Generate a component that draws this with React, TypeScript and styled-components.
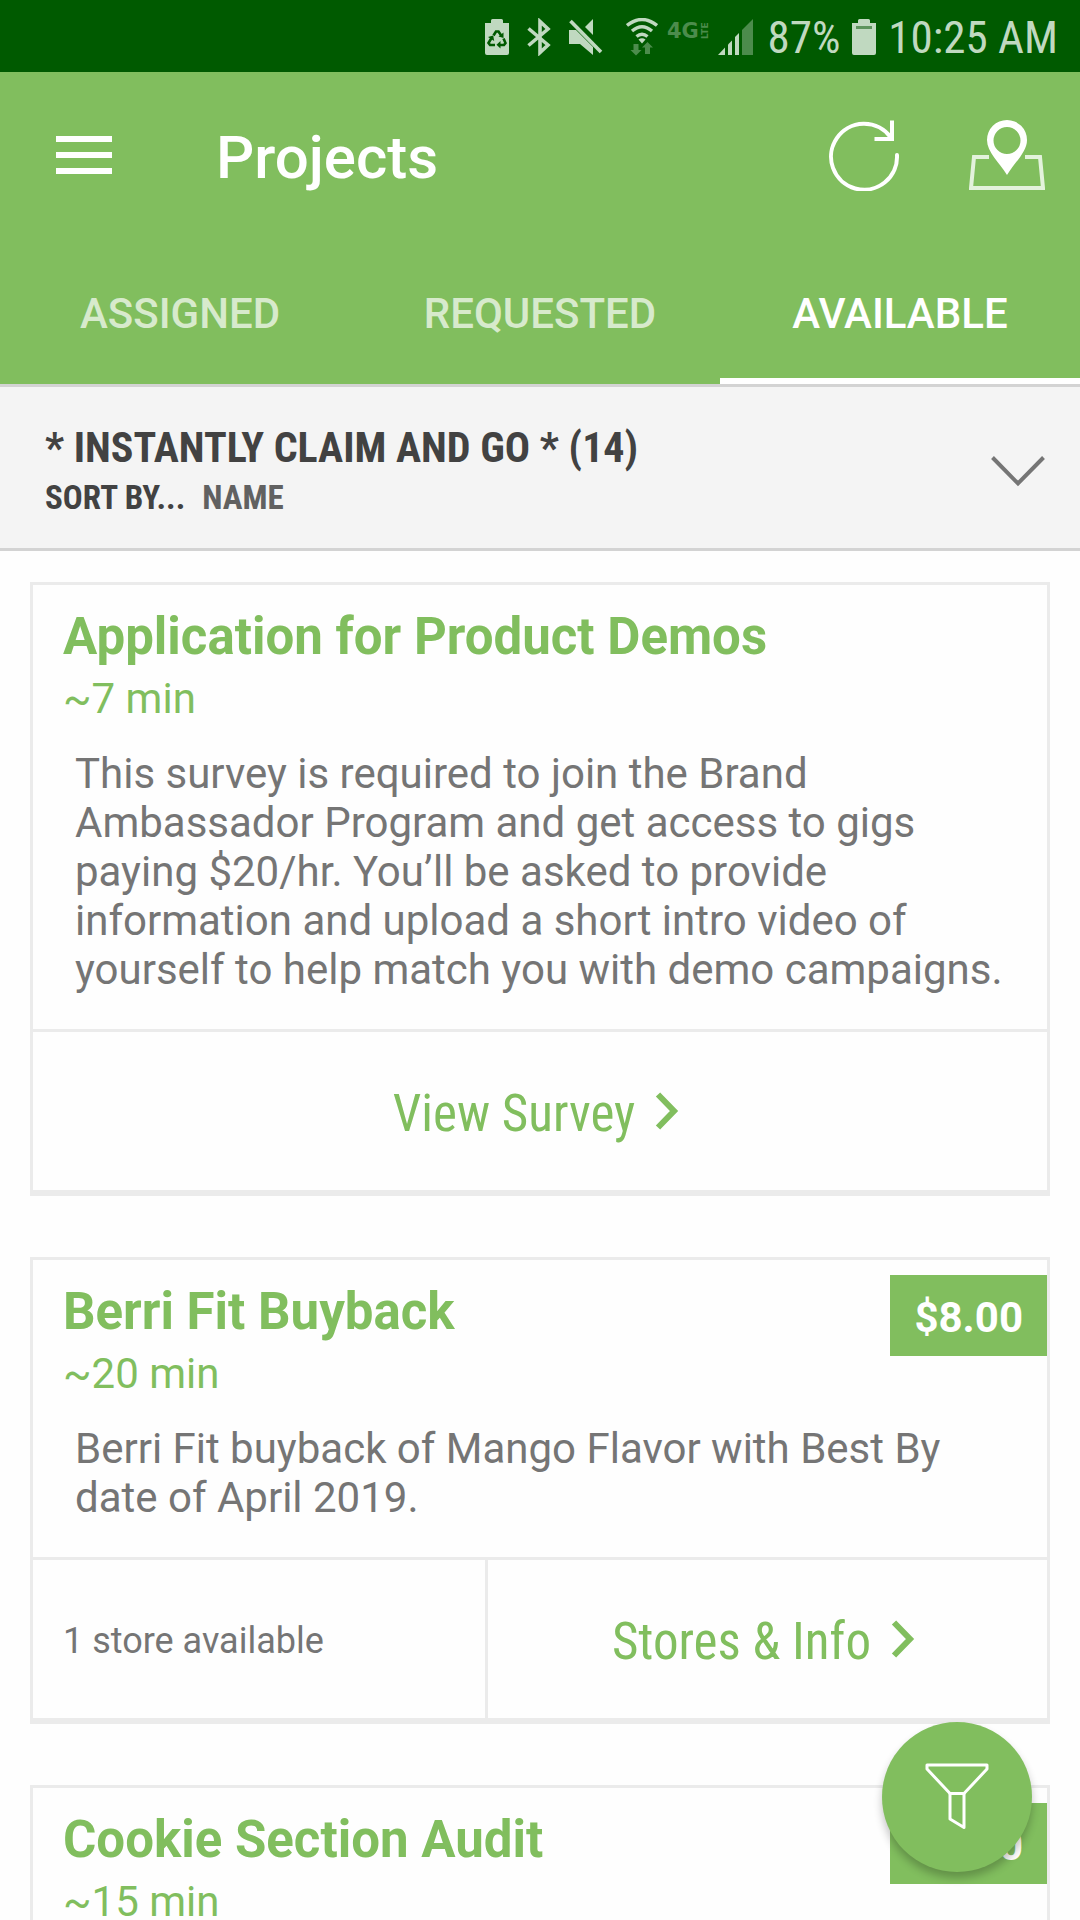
import React from "react";
import styled, { createGlobalStyle, css } from "styled-components";

const green = "#81be5e";
const statusInk = "#c0d9c0";
const line = "#ebebeb";
const body = '"Roboto", "Noto Sans", sans-serif';
const condensed = '"Roboto Condensed", "Liberation Sans Narrow", "Roboto", sans-serif';

const GlobalStyle = createGlobalStyle`
  * { box-sizing: border-box; }
  body { margin: 0; background: #fefefe; font-family: ${body}; }
  h1, h2, h3, p { margin: 0; }
  button { border: 0; padding: 0; background: none; font: inherit; color: inherit; cursor: pointer; }
  svg { display: block; flex: none; }
`;

const Screen = styled.div`
  display: flex;
  flex-direction: column;
  height: 100vh;
  overflow: hidden;
`;

const StatusBar = styled.div`
  display: flex;
  align-items: center;
  justify-content: flex-end;
  flex: none;
  height: 72px;
  padding: 0 22px;
  background: #005a00;
  color: ${statusInk};
  font: 400 45px/72px ${condensed};
`;

const StatusIcons = styled.div`
  display: flex;
  align-items: center;
  gap: 18px;
  padding-top: 2px;
  margin-right: 13px;
`;

const RadioIcons = styled.div`
  display: flex;
  align-items: center;
  gap: 9px;
  margin-left: 5px;
`;

const StatusText = styled.span`
  white-space: nowrap;
  padding-top: 4px;
`;

const StatusBattery = styled.span`
  margin: 2px 12px 0;
`;

const Header = styled.header`
  flex: none;
  background: ${green};
  color: #fff;
`;

const Toolbar = styled.div`
  display: flex;
  align-items: center;
  height: 168px;
  padding: 0 35px 2px 56px;
`;

const Title = styled.h1`
  flex: 1;
  margin-left: 104px;
  padding-top: 6px;
  font-size: 60px;
  line-height: 70px;
  font-weight: 500;
`;

const Actions = styled.div`
  display: flex;
  gap: 68px;
`;

const Tabs = styled.nav`
  display: grid;
  grid-template-columns: repeat(3, 1fr);
`;

const Tab = styled.button<{ $active?: boolean }>`
  height: 144px;
  padding-top: 10px;
  font-size: 42px;
  line-height: 50px;
  font-weight: 500;
  color: rgba(255, 255, 255, 0.7);
  border-bottom: 6px solid transparent;
  ${(p) => p.$active && css`
    color: #fff;
    border-bottom-color: #fff;
  `}
`;

const GroupBar = styled.button`
  display: flex;
  align-items: center;
  justify-content: space-between;
  flex: none;
  width: 100%;
  height: 167px;
  padding: 6px 34px 0 45px;
  background: #f4f4f4;
  border-top: 3px solid #d3d3d3;
  border-bottom: 3px solid #d3d3d3;
  text-align: left;
  color: #424242;
  font-family: ${condensed};
  font-weight: 700;
`;

const GroupTitle = styled.span`
  display: block;
  font-size: 42px;
  line-height: 54px;
`;

const GroupSort = styled.span`
  display: flex;
  gap: 17px;
  font-size: 33px;
  line-height: 46px;
`;

const SortValue = styled.span`
  color: #616161;
`;

const List = styled.main`
  display: flex;
  flex-direction: column;
  flex: 1;
  gap: 61px;
  min-height: 0;
  padding: 31px 30px 0;
  overflow: hidden;
`;

const Card = styled.article`
  flex: none;
  background: #fefefe;
  border: 3px solid ${line};
  border-bottom-width: 6px;
`;

const CardTop = styled.div`
  display: flex;
  justify-content: space-between;
  align-items: flex-start;
  padding-left: 30px;
  color: ${green};
`;

const Heading = styled.div`
  padding: 22px 0 18px;
`;

const CardTitle = styled.h2`
  font-size: 51px;
  line-height: 60px;
  font-weight: 700;
`;

const Duration = styled.p`
  font-size: 42px;
  line-height: 64px;
`;

const Price = styled.span`
  margin-top: 15px;
  padding: 4px 24px 0;
  background: ${green};
  color: #fff;
  font-size: 42px;
  line-height: 77px;
  font-weight: 700;
`;

const Description = styled.p`
  padding: 0 36px 35px 42px;
  color: #757575;
  font-size: 42px;
  line-height: 49px;
`;

const CardFooter = styled.div<{ $split: boolean }>`
  display: grid;
  grid-template-columns: ${(p) => (p.$split ? "455fr 559fr" : "1fr")};
  height: 161px;
  border-top: 3px solid ${line};
`;

const StoreCount = styled.div`
  display: flex;
  align-items: center;
  padding: 4px 0 0 30px;
  border-right: 3px solid ${line};
  color: #757575;
  font-size: 36px;
`;

const CardAction = styled.button`
  display: flex;
  align-items: center;
  justify-content: center;
  gap: 20px;
  padding-right: 8px;
  color: ${green};
  font-family: ${condensed};
  font-size: 51px;
  line-height: 60px;
`;

const ActionLabel = styled.span`
  padding-top: 5px;
`;

const FilterButton = styled.button`
  position: fixed;
  right: 48px;
  bottom: 48px;
  display: flex;
  align-items: center;
  justify-content: center;
  width: 150px;
  height: 150px;
  border-radius: 50%;
  background: ${green};
  box-shadow: 0 6px 9px rgba(0, 0, 0, 0.24);
`;

const BatteryShape = "M0 4h6V1.500q0-1.500 1.500-1.500h9q1.500 0 1.500 1.500V4h6v30q0 2-2 2H2q-2 0-2-2z";

function Recycle() {
  return (
    <svg width="24" height="36" viewBox="0 0 24 36" fill={statusInk}>
      <path d={BatteryShape} />
      <g fill="none" stroke="#005a00" strokeWidth="2.600">
        <path d="M8.500 16.500l2.500-4h2.500l3 4.500" />
        <path d="M18.500 19.500l2 4.500-1.500 2h-5" />
        <path d="M10 26H5l-1.500-2 3-5" />
      </g>
      <g fill="#005a00">
        <path d="M18.500 13.500v5.500l-5-1.500z" />
        <path d="M15.500 22v7.500l-4-3.700z" />
        <path d="M3 18l5.200-1.500 1 5.500z" />
      </g>
    </svg>
  );
}

function Bluetooth() {
  return (
    <svg width="24" height="38" viewBox="0 0 24 38" fill="none" stroke={statusInk} strokeWidth="3.600">
      <path d="M1.500 10.500L21 27 13 34.500V3.500L21 11 1.500 27.500" />
    </svg>
  );
}

function Muted() {
  return (
    <svg width="34" height="38" viewBox="0 0 34 38" fill={statusInk}>
      <path d="M0 12h7l17 17v8L11 26H0z" />
      <path d="M24 1v16l-8-8z" />
      <path d="M1.500 3L32 34" stroke={statusInk} strokeWidth="3.600" fill="none" />
    </svg>
  );
}

function Wifi() {
  return (
    <svg width="32" height="38" viewBox="0 0 32 38" fill="none" stroke={statusInk} strokeWidth="3.400">
      <path d="M1 7.500q15-12 30 0" />
      <path d="M6 13q10-8.500 20 0" />
      <path d="M10.500 18.500q5.500-4.500 11 0" />
      <path d="M12.500 21.500q3.500-2.500 7 0L16 25.500z" fill={statusInk} stroke="none" />
      <g fill="#4c8c4c" stroke="none">
        <path d="M7.500 26h5v6h3L10 37.500 4.500 32h3z" />
        <path d="M21.500 24l5.500 5.500h-3V36h-5v-6.500h-3z" />
      </g>
    </svg>
  );
}

function Network() {
  return (
    <svg width="42" height="38" viewBox="0 0 42 38" fill="#4c8c4c" fontFamily="DejaVu Sans, sans-serif" fontWeight="700">
      <text x="0" y="20" fontSize="21">4G</text>
      <text x="41" y="21" fontSize="9" transform="rotate(-90 41 21)">LTE</text>
    </svg>
  );
}

function Signal() {
  return (
    <svg width="36" height="38" viewBox="0 0 36 38" fill={statusInk}>
      <path d="M0 37l7-7.500V37z" />
      <path d="M10 26.500l4-4V37h-4z" />
      <path d="M17 19l4-4v22h-4z" />
      <path d="M24 12l11-11v36H24z" fill="#4c8c4c" />
    </svg>
  );
}

function Battery() {
  return (
    <svg width="24" height="36" viewBox="0 0 24 36" fill={statusInk}>
      <path d={BatteryShape} />
      <path d="M4 7h16v3H4z" fill="#5c945c" />
    </svg>
  );
}

function MenuIcon() {
  return (
    <svg width="56" height="38" viewBox="0 0 56 38" fill="#fff">
      <path d="M0 0h56v6H0zM0 16h56v6H0zM0 32h56v6H0z" />
    </svg>
  );
}

function Refresh() {
  return (
    <svg width="72" height="72" viewBox="0 0 72 72" fill="none" stroke="#fff" strokeWidth="4" strokeLinecap="round">
      <path d="M68 36A33 33 0 1 1 61.500 18" />
      <path d="M63 1.500V20H45.500" strokeLinecap="butt" />
    </svg>
  );
}

function MapPin() {
  return (
    <svg width="76" height="72" viewBox="0 0 76 72" fill="none" stroke="#e3f2dc" strokeWidth="4">
      <path d="M20 38H5L2 69h72l-3-31H56" />
      <path
        d="M38 1a20 20 0 0 1 20 20c0 12-12 22-20 35C30 43 18 33 18 21A20 20 0 0 1 38 1zm0 7a13 13 0 1 0 0 27 13 13 0 0 0 0-27z"
        fill="#fff"
        stroke="none"
      />
    </svg>
  );
}

function ChevronDown() {
  return (
    <svg width="56" height="32" viewBox="0 0 56 32" fill="none" stroke="#757575" strokeWidth="4">
      <path d="M2.500 2.500L28 28.500 53.500 2.500" />
    </svg>
  );
}

function ChevronRight() {
  return (
    <svg width="24" height="38" viewBox="0 0 24 38" fill="none" stroke={green} strokeWidth="6">
      <path d="M3 2.500L19 19 3 35.500" />
    </svg>
  );
}

function Funnel() {
  return (
    <svg width="64" height="68" viewBox="0 0 64 68" fill="none" stroke="#fff" strokeWidth="3" strokeLinejoin="round">
      <path d="M2 2h60v4L39 30.500H25L2 6z" />
      <path d="M25 30.500h14v34L25 56z" />
    </svg>
  );
}

interface Project {
  title: string;
  minutes: number;
  description?: string;
  price?: string;
  stores?: string;
  action?: string;
}

const projects: Project[] = [
  {
    title: "Application for Product Demos",
    minutes: 7,
    description:
      "This survey is required to join the Brand Ambassador Program and get access to gigs paying $20/hr. You’ll be asked to provide information and upload a short intro video of yourself to help match you with demo campaigns.",
    action: "View Survey",
  },
  {
    title: "Berri Fit Buyback",
    minutes: 20,
    price: "$8.00",
    description: "Berri Fit buyback of Mango Flavor with Best By date of April 2019.",
    stores: "1 store available",
    action: "Stores & Info",
  },
  { title: "Cookie Section Audit", minutes: 15, price: "$5.00" },
];

function ProjectCard({ project }: { project: Project }) {
  return (
    <Card>
      <CardTop>
        <Heading>
          <CardTitle>{project.title}</CardTitle>
          <Duration>~{project.minutes} min</Duration>
        </Heading>
        {project.price && <Price>{project.price}</Price>}
      </CardTop>
      {project.description && <Description>{project.description}</Description>}
      {project.action && (
        <CardFooter $split={Boolean(project.stores)}>
          {project.stores && <StoreCount>{project.stores}</StoreCount>}
          <CardAction>
            <ActionLabel>{project.action}</ActionLabel>
            <ChevronRight />
          </CardAction>
        </CardFooter>
      )}
    </Card>
  );
}

export default function App() {
  return (
    <Screen>
      <GlobalStyle />
      <StatusBar>
        <StatusIcons>
          <Recycle />
          <Bluetooth />
          <Muted />
          <RadioIcons>
            <Wifi />
            <Network />
            <Signal />
          </RadioIcons>
        </StatusIcons>
        <StatusText>87%</StatusText>
        <StatusBattery>
          <Battery />
        </StatusBattery>
        <StatusText>10:25 AM</StatusText>
      </StatusBar>
      <Header>
        <Toolbar>
          <button aria-label="Menu">
            <MenuIcon />
          </button>
          <Title>Projects</Title>
          <Actions>
            <button aria-label="Refresh">
              <Refresh />
            </button>
            <button aria-label="Map">
              <MapPin />
            </button>
          </Actions>
        </Toolbar>
        <Tabs>
          <Tab>ASSIGNED</Tab>
          <Tab>REQUESTED</Tab>
          <Tab $active>AVAILABLE</Tab>
        </Tabs>
      </Header>
      <GroupBar>
        <span>
          <GroupTitle>* INSTANTLY CLAIM AND GO * (14)</GroupTitle>
          <GroupSort>
            SORT BY... <SortValue>NAME</SortValue>
          </GroupSort>
        </span>
        <ChevronDown />
      </GroupBar>
      <List>
        {projects.map((project) => (
          <ProjectCard key={project.title} project={project} />
        ))}
      </List>
      <FilterButton aria-label="Filter">
        <Funnel />
      </FilterButton>
    </Screen>
  );
}
